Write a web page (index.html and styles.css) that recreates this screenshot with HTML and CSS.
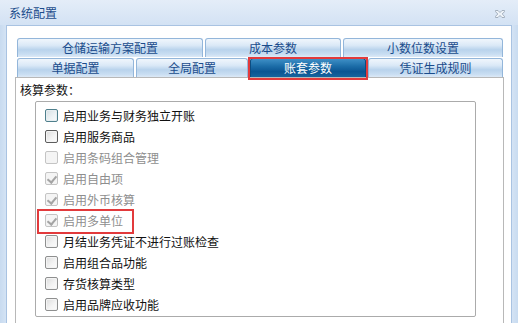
FILE: index.html
```html
<!DOCTYPE html>
<html lang="zh-CN">
<head>
<meta charset="utf-8">
<title>系统配置</title>
<link rel="stylesheet" href="styles.css">
</head>
<body>
<div class="window">
  <div class="titlebar">
    <span class="title">系统配置</span>
    <svg class="close" width="10" height="9" viewBox="0 0 10 9">
      <path d="M0.5 0.5h2.5l2 2 2-2h2.5v1.2l-2.3 2.3 2.3 2.3v1.2h-2.5l-2-2-2 2h-2.5v-1.2l2.3-2.3-2.3-2.3z" fill="#eef3f8" stroke="#a3afbd" stroke-width="1"/>
    </svg>
  </div>
  <div class="body">
    <div class="tabs">
      <div class="tabrow row1">
        <div class="tab">仓储运输方案配置</div>
        <div class="tab">成本参数</div>
        <div class="tab">小数位数设置</div>
      </div>
      <div class="tabrow row2">
        <div class="tab">单据配置</div>
        <div class="tab">全局配置</div>
        <div class="tab active">账套参数</div>
        <div class="tab">凭证生成规则</div>
      </div>
    </div>
    <div class="panel">
      <div class="section-label">核算参数：</div>
      <div class="group">
        <div class="opt"><span class="cb focus"></span><span class="txt">启用业务与财务独立开账</span></div>
        <div class="opt"><span class="cb dark"></span><span class="txt">启用服务商品</span></div>
        <div class="opt disabled"><span class="cb"></span><span class="txt">启用条码组合管理</span></div>
        <div class="opt disabled"><span class="cb checked"></span><span class="txt">启用自由项</span></div>
        <div class="opt disabled"><span class="cb checked"></span><span class="txt">启用外币核算</span></div>
        <div class="opt disabled marked"><span class="cb checked"></span><span class="txt">启用多单位</span></div>
        <div class="opt"><span class="cb"></span><span class="txt">月结业务凭证不进行过账检查</span></div>
        <div class="opt"><span class="cb"></span><span class="txt">启用组合品功能</span></div>
        <div class="opt"><span class="cb"></span><span class="txt">存货核算类型</span></div>
        <div class="opt"><span class="cb"></span><span class="txt">启用品牌应收功能</span></div>
      </div>
    </div>
  </div>
</div>
</body>
</html>
```

FILE: styles.css
```css
* { box-sizing: border-box; }
html, body { margin: 0; padding: 0; }
body {
  width: 518px;
  height: 323px;
  overflow: hidden;
  font-family: "Noto Sans CJK SC", "Noto Sans", "Liberation Sans", sans-serif;
  font-size: 12px;
  background: #cfdff2;
}
.window {
  width: 518px;
  height: 323px;
  display: flex;
  flex-direction: column;
  background: linear-gradient(to right, #c8dbf0 0, #d4e3f4 6px, #d4e3f4 512px, #c8dbf0 518px);
}
.titlebar {
  height: 25px;
  flex: none;
  display: flex;
  align-items: center;
  justify-content: space-between;
  padding: 0 13px 0 9px;
  background: linear-gradient(#e4edf8, #d3e2f4);
}
.title {
  color: #1d4d8c;
  font-size: 12px;
  line-height: 16px;
}
.close { display: block; margin-top: 4px; }
.body {
  flex: 1;
  margin: 0 6px;
  background: #fff;
  border: 1px solid #a9c3e2;
  border-bottom: none;
  padding: 12px 7px 0 8px;
  display: flex;
  flex-direction: column;
}
.tabs {
  margin: 0 1px 0 2px;
  flex: none;
}
.tabrow {
  display: grid;
  column-gap: 2px;
  height: 19px;
}
.row1 { grid-template-columns: 186px 136px 160px; margin-bottom: 1px; }
.row2 { grid-template-columns: 117px 112px 116px 135px; }
.tab {
  position: relative;
  border: 1px solid #93b6da;
  border-bottom: none;
  border-radius: 3px 3px 0 0;
  background: linear-gradient(#f0f6fc 0, #dbe9f7 35%, #b9d3ec 60%, #c9def2 85%, #dce9f6 100%);
  color: #1a4c8c;
  text-align: center;
  line-height: 18px;
  font-size: 12px;
  white-space: nowrap;
}
.tab.active {
  background: linear-gradient(#3e8fc6 0, #1c6da8 40%, #0b5592 70%, #16649e 100%);
  border-color: #0d4c80;
  color: #fff;
}
.tab.active::after {
  content: "";
  position: absolute;
  left: -3px;
  top: -2px;
  right: -3px;
  bottom: -3px;
  border: 2px solid #e23a3c;
}
.panel {
  flex: 1;
  border: 1px solid #b8b8b8;
  border-bottom: none;
  padding: 4px 0 0 4px;
}
.section-label {
  color: #111;
  line-height: 16px;
  font-size: 12px;
}
.group {
  margin: 3px 0 0 15px;
  width: 441px;
  border: 1px solid #ababab;
  border-radius: 2px;
  padding: 3px 0 1px 9px;
}
.opt {
  position: relative;
  height: 21px;
  display: flex;
  align-items: center;
  gap: 5px;
  color: #111;
}
.opt.disabled { color: #8e8e8e; }
.opt.marked::after {
  content: "";
  position: absolute;
  left: -8px;
  top: -1px;
  width: 93px;
  height: 21px;
  border: 2px solid #e23a3c;
}
.cb {
  position: relative;
  width: 13px;
  height: 13px;
  flex: none;
  border: 1px solid #8e8f8f;
  border-radius: 2px;
  background: linear-gradient(135deg, #dcdcdc, #f4f4f4 60%, #fbfbfb);
  box-shadow: inset 0 0 0 1px #f4f4f4;
}
.cb.dark { border-color: #5c5c5c; }
.cb.focus { border-color: #4e7f8c; background: linear-gradient(135deg, #d5dfe3, #eef3f5 60%, #f8fafb); box-shadow: inset 0 0 0 1px #e7eef1; }
.disabled .cb {
  border-color: #c4c4c4;
  background: #f4f4f4;
  box-shadow: none;
}
.cb.checked::after {
  content: "";
  position: absolute;
  left: 3px;
  top: 1px;
  width: 4px;
  height: 7px;
  border: solid #a4a4a4;
  border-width: 0 2px 2px 0;
  transform: rotate(40deg);
}
.txt { line-height: 16px; white-space: nowrap; }
```
